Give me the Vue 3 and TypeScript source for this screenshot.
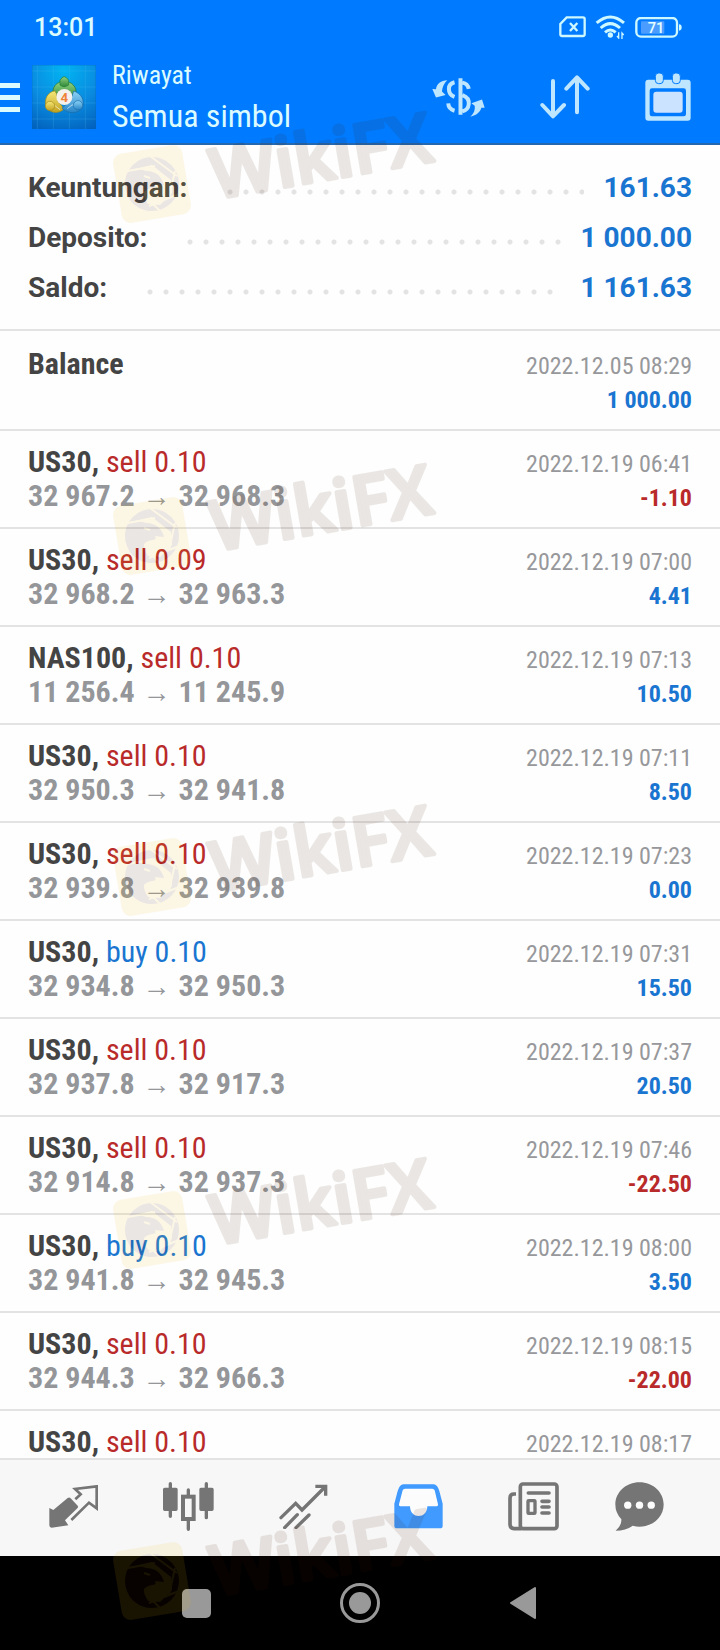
<script setup lang="ts">
interface SummaryLine {
  label: string
  value: string
}

interface Deal {
  symbol: string
  side?: 'buy' | 'sell'
  volume?: string
  open?: string
  close?: string
  time: string
  profit: string
}

const summary: SummaryLine[] = [
  { label: 'Keuntungan:', value: '161.63' },
  { label: 'Deposito:', value: '1 000.00' },
  { label: 'Saldo:', value: '1 161.63' },
]

const deals: Deal[] = [
  { symbol: 'Balance', time: '2022.12.05 08:29', profit: '1 000.00' },
  { symbol: 'US30', side: 'sell', volume: '0.10', open: '32 967.2', close: '32 968.3', time: '2022.12.19 06:41', profit: '-1.10' },
  { symbol: 'US30', side: 'sell', volume: '0.09', open: '32 968.2', close: '32 963.3', time: '2022.12.19 07:00', profit: '4.41' },
  { symbol: 'NAS100', side: 'sell', volume: '0.10', open: '11 256.4', close: '11 245.9', time: '2022.12.19 07:13', profit: '10.50' },
  { symbol: 'US30', side: 'sell', volume: '0.10', open: '32 950.3', close: '32 941.8', time: '2022.12.19 07:11', profit: '8.50' },
  { symbol: 'US30', side: 'sell', volume: '0.10', open: '32 939.8', close: '32 939.8', time: '2022.12.19 07:23', profit: '0.00' },
  { symbol: 'US30', side: 'buy', volume: '0.10', open: '32 934.8', close: '32 950.3', time: '2022.12.19 07:31', profit: '15.50' },
  { symbol: 'US30', side: 'sell', volume: '0.10', open: '32 937.8', close: '32 917.3', time: '2022.12.19 07:37', profit: '20.50' },
  { symbol: 'US30', side: 'sell', volume: '0.10', open: '32 914.8', close: '32 937.3', time: '2022.12.19 07:46', profit: '-22.50' },
  { symbol: 'US30', side: 'buy', volume: '0.10', open: '32 941.8', close: '32 945.3', time: '2022.12.19 08:00', profit: '3.50' },
  { symbol: 'US30', side: 'sell', volume: '0.10', open: '32 944.3', close: '32 966.3', time: '2022.12.19 08:15', profit: '-22.00' },
  { symbol: 'US30', side: 'sell', volume: '0.10', time: '2022.12.19 08:17', profit: '' },
]

const stampTops: number[] = [144, 496, 837, 1190, 1541]

const isLoss = (deal: Deal): boolean => deal.profit.startsWith('-')
</script>

<template>
  <div class="screen">
    <header class="top">
      <div class="status">
        <span class="clock">13:01</span>
        <span class="status-icons">
          <svg class="sim" viewBox="477 50 81 64" aria-hidden="true">
            <path d="M500 54H549Q554 54 554 59V105Q554 110 549 110H486Q481 110 481 105V74Z" />
            <path d="M510 71L532 95M532 71L510 95" />
          </svg>
          <svg class="wifi" viewBox="585 44 93 74" aria-hidden="true">
            <path class="wave" d="M590 68Q631 32 672 68M602 83Q631 57 660 83M615 96Q631 82 647 96" />
            <circle cx="631" cy="104" r="8" />
            <path class="thin" d="M656 96V113L651 107M666 116V98L671 104" />
          </svg>
          <svg class="battery" viewBox="704 48 141 63" aria-hidden="true">
            <rect class="charge" x="722" y="61" width="70" height="37" rx="3" />
            <rect class="shell" x="708" y="51" width="122" height="56" rx="14" />
            <path class="nub" d="M836 70Q844 70 844 79Q844 89 836 89Z" />
            <text x="767" y="95" text-anchor="middle">71</text>
          </svg>
        </span>
      </div>
      <div class="titlebar">
        <button class="menu" type="button" aria-label="Menu"><i></i><i></i><i></i></button>
        <svg class="app-icon" viewBox="96 194 192 194" aria-hidden="true">
          <defs>
            <radialGradient id="sky" cx="50%" cy="8%" r="100%">
              <stop offset="0" stop-color="#00b4f2" />
              <stop offset="0.55" stop-color="#0a8be0" />
              <stop offset="1" stop-color="#0262bd" />
            </radialGradient>
            <linearGradient id="green" x1="0" y1="0" x2="0" y2="1">
              <stop offset="0" stop-color="#8fd07e" />
              <stop offset="1" stop-color="#2f8838" />
            </linearGradient>
            <linearGradient id="yellow" x1="0" y1="0" x2="0" y2="1">
              <stop offset="0" stop-color="#f5e878" />
              <stop offset="1" stop-color="#c3a321" />
            </linearGradient>
            <linearGradient id="blue" x1="0" y1="0" x2="0" y2="1">
              <stop offset="0" stop-color="#8dd3f6" />
              <stop offset="1" stop-color="#2583c7" />
            </linearGradient>
          </defs>
          <rect x="96" y="194" width="192" height="194" fill="url(#sky)" />
          <path d="M112 194V388M160 194V388M208 194V388M256 194V388M96 212H288M96 260H288M96 308H288M96 356H288" stroke="#4fc0f5" stroke-opacity=".35" stroke-width="2" />
          <path d="M96 194H288V388H96Z" fill="none" stroke="#0565b5" stroke-opacity=".5" stroke-width="3" />
          <path d="M178 246C158 254 154 276 164 296L222 296C234 276 228 254 208 246Z" fill="url(#green)" stroke="#24742d" stroke-width="2" />
          <path d="M165 272C142 274 132 298 138 318C150 342 178 340 192 326L174 302C170 292 172 282 165 272Z" fill="url(#yellow)" stroke="#a18919" stroke-width="2" />
          <path d="M221 272C245 280 254 300 248 320C236 342 204 342 186 324L208 303Q217 291 221 272Z" fill="url(#blue)" stroke="#176da7" stroke-width="2" />
          <path d="M151 315L166 317L180 328M231 314L216 314L202 325" fill="none" stroke="#fff" stroke-opacity=".6" stroke-width="3" />
          <path d="M180 240Q192 218 206 240L206 254Q192 264 180 254Z" fill="url(#green)" stroke="#217b33" stroke-width="2" />
          <circle cx="150" cy="317" r="14" fill="url(#yellow)" stroke="#a48a18" stroke-width="2" />
          <circle cx="234" cy="315" r="14" fill="url(#blue)" stroke="#1b70ad" stroke-width="2" />
          <circle cx="193" cy="290" r="24" fill="#f4f1ec" />
          <text x="193" y="304" text-anchor="middle" class="four">4</text>
        </svg>
        <h1 class="heading">
          <span class="section">Riwayat</span>
          <span class="filter">Semua simbol</span>
        </h1>
        <div class="actions">
          <button type="button" aria-label="Simbol">
            <svg class="currency" viewBox="100 226 160 124" aria-hidden="true">
              <path class="line" d="M186 233V343M168 245Q151 249 151 265Q151 283 168 289M192 246Q208 249 211 265M192 284Q213 292 211 311Q209 329 192 333M149 309Q150 326 168 331" />
              <path d="M146 239C127 240 114 250 112 266L101 265L112 291L141 283L130 273C131 259 137 248 146 239ZM216 349C234 345 246 335 249 322H259L251 297L219 308L229 316C231 329 226 340 216 349Z" />
            </svg>
          </button>
          <button type="button" aria-label="Urutkan">
            <svg class="sort" viewBox="417 224 150 130" aria-hidden="true">
              <path class="line" d="M456 242V348M424 314L456 348L489 314M528 336V232M496 265L528 231L560 265" />
            </svg>
          </button>
          <button type="button" aria-label="Kalender">
            <svg class="calendar" viewBox="735 217 138 144" aria-hidden="true">
              <rect x="736" y="237" width="136" height="123" rx="9" />
              <rect class="gap" x="749" y="263" width="109" height="84" rx="7" />
              <rect class="day" x="760" y="273" width="88" height="63" rx="9" />
              <rect class="ring" x="766" y="217" width="24" height="32" rx="10" />
              <rect class="ring" x="817" y="217" width="24" height="32" rx="10" />
            </svg>
          </button>
        </div>
      </div>
    </header>

    <main class="history">
      <dl class="summary">
        <div v-for="line in summary" :key="line.label" class="summary-line">
          <dt>{{ line.label }}</dt>
          <span class="leader"></span>
          <dd>{{ line.value }}</dd>
        </div>
      </dl>
      <ul class="deals">
        <li v-for="deal in deals" :key="deal.time" class="deal" :class="{ deposit: !deal.side }">
          <div class="line">
            <span class="name">
              <b>{{ deal.symbol }}<template v-if="deal.side">, </template></b><span v-if="deal.side" :class="deal.side">{{ deal.side }} {{ deal.volume }}</span>
            </span>
            <time>{{ deal.time }}</time>
          </div>
          <div class="line">
            <span class="prices"><template v-if="deal.open">{{ deal.open }}<span class="arrow">→</span>{{ deal.close }}</template></span>
            <span class="profit" :class="{ loss: isLoss(deal) }">{{ deal.profit }}</span>
          </div>
        </li>
      </ul>
    </main>

    <nav class="tabs">
      <button type="button" aria-label="Kuotasi">
        <svg class="t1" viewBox="147 137 147 129" aria-hidden="true">
          <path class="solid" d="M148 206L160 212L203 176Q208 173 212 177L233 199Q236 203 232 207L195 243L205 258L155 265Q148 265 148 258Z" />
          <path d="M226 180L242 165L225 149L290 141V207L267 190L214 242" stroke-width="8" />
        </svg>
      </button>
      <button type="button" aria-label="Grafik">
        <svg class="t2" viewBox="489 126 153 147" aria-hidden="true">
          <path d="M511 131V229M619 131V233M565 150V168M565 242V268" stroke-width="10" stroke-linecap="round" />
          <path class="solid" d="M494 143H528Q533 143 533 148V208Q533 213 528 213H494Q489 213 489 208V148Q489 143 494 143ZM603 143H636Q641 143 641 148V208Q641 213 636 213H603Q598 213 598 208V148Q598 143 603 143Z" />
          <rect x="549" y="170" width="32" height="67" stroke-width="12" />
        </svg>
      </button>
      <button type="button" aria-label="Perdagangan">
        <svg class="t3" viewBox="836 130 147 136" aria-hidden="true">
          <path d="M842 231L886 188L905 208L974 139M853 261L891 222M887 261L926 223" stroke-width="10" stroke-linecap="round" />
          <path d="M945 137H976V165" stroke-width="10" />
        </svg>
      </button>
      <button type="button" aria-label="Riwayat" aria-current="page">
        <svg class="t4" viewBox="102 131 147 134" aria-hidden="true">
          <path class="active" d="M130 132H221Q232 133 238 152L248 190V256Q248 264 240 264H111Q103 264 103 256V190L113 152Q119 133 130 132Z" />
          <path class="hole" d="M135 145H217Q222 145 224 150L234 192Q235 198 230 198H202C202 237 150 237 150 198H121Q116 198 117 192L128 150Q130 145 135 145Z" />
        </svg>
      </button>
      <button type="button" aria-label="Berita">
        <svg class="t5" viewBox="444 125 153 146" aria-hidden="true">
          <path d="M468 161H462Q450 161 450 173V252Q450 265 462 265H484" stroke-width="11" />
          <rect x="481" y="131" width="110" height="134" rx="8" stroke-width="11" />
          <path d="M505 158H567M546 183H567M546 200H567M546 218H567" stroke-width="11" stroke-linecap="round" />
          <rect x="504" y="181" width="21" height="38" rx="2" stroke-width="10" />
        </svg>
      </button>
      <button type="button" aria-label="Pesan">
        <svg class="t6" viewBox="764 125 146 146" aria-hidden="true">
          <path class="solid" d="M837 126C877 126 909 156 909 192C909 229 877 258 837 258Q827 258 817 255Q796 270 766 270Q784 255 783 236Q765 217 765 192C765 156 797 126 837 126Z" />
          <circle class="dot" cx="802" cy="194" r="11" />
          <circle class="dot" cx="837" cy="194" r="11" />
          <circle class="dot" cx="872" cy="194" r="11" />
        </svg>
      </button>
    </nav>

    <footer class="system">
      <button type="button" aria-label="Aplikasi terbaru"><span class="square"></span></button>
      <button type="button" aria-label="Beranda"><span class="home"></span></button>
      <button type="button" aria-label="Kembali">
        <svg class="back" viewBox="0 0 28 34" aria-hidden="true"><path d="M26 2V32L2 17Z" /></svg>
      </button>
    </footer>

    <svg
      v-for="top in stampTops"
      :key="top"
      class="stamp"
      :style="{ top: top - 44 + 'px' }"
      viewBox="0 -44 340 130"
      aria-hidden="true"
    >
      <g transform="translate(40 40)">
        <rect class="tile" x="-35" y="-35" width="70" height="70" rx="9" transform="rotate(-9.5)" />
        <circle class="ink" r="27" />
        <path class="tile" d="M-22 -14L0 -19L19 -4L20 9L8 21L-4 20Q-14 5 0 -4Z" />
        <path class="ink" d="M-25 -10Q-17 -17 -6 -13Q8 -13 12 1L3 0Q5 4 0 4Q-13 6 -7 18Q-4 23 0 27Q-15 26 -22 16Q-29 2 -25 -10Z" />
        <path class="cut" d="M-24 -13L3 -18M-2 -28L25 -8M23 -13L17 14M27 10L-3 22M8 27L-5 14M-8 -8L-2 -6" />
      </g>
      <text transform="translate(103 55) rotate(-9.8)">WikiFX</text>
    </svg>
  </div>
</template>

<style>
body {
  margin: 0;
}
</style>

<style scoped>
.screen {
  position: relative;
  display: flex;
  flex-direction: column;
  height: 100vh;
  overflow: hidden;
  background: #fefefe;
  color: #444;
  font-family: "Roboto Condensed", Roboto, sans-serif;
}

button {
  display: flex;
  align-items: center;
  justify-content: center;
  margin: 0;
  padding: 0;
  border: 0;
  background: none;
}

svg {
  display: block;
}

.top {
  flex: none;
  border-bottom: 2px solid #2468b0;
  background: #007bff;
  color: #dcfbff;
}

.status {
  display: flex;
  align-items: center;
  justify-content: space-between;
  height: 56px;
  padding: 0 38px 0 34px;
}

.clock {
  font: 500 25px/56px Roboto, sans-serif;
}

.status-icons {
  display: flex;
  align-items: center;
  gap: 9px;
  margin-bottom: 2px;
}

.status-icons path,
.status-icons .shell {
  fill: none;
  stroke: #cdf8ff;
  stroke-width: 7;
}

.sim {
  width: 27px;
}

.wifi {
  width: 31px;
}

.wifi circle {
  fill: #cdf8ff;
}

.status-icons .wave {
  stroke-width: 9;
}

.status-icons .thin {
  stroke-width: 4;
}

.battery {
  width: 47px;
}

.status-icons .nub {
  fill: #cdf8ff;
  stroke: none;
}

.charge {
  fill: #4a9dff;
}

.battery text {
  fill: #e4fdff;
  font: 500 44px Roboto, sans-serif;
}

.titlebar {
  display: flex;
  align-items: center;
  box-sizing: border-box;
  height: 87px;
  padding: 0 29px 5px 0;
}

.menu {
  flex-direction: column;
  gap: 7px;
  width: 20px;
  margin-right: 12px;
}

.menu i {
  width: 100%;
  height: 5px;
  background: #dcfbff;
}

.app-icon {
  width: 64px;
}

.four {
  fill: #ee8238;
  font: 700 40px Roboto, sans-serif;
}

.heading {
  display: flex;
  flex-direction: column;
  margin: 0 auto 0 16px;
  font-weight: 400;
  white-space: nowrap;
}

.section {
  font-size: 26px;
  line-height: 38px;
}

.filter {
  font-size: 32px;
  line-height: 44px;
}

.actions {
  display: flex;
  align-items: center;
  gap: 55px;
}

.actions svg {
  fill: #bfe6ff;
}

.actions .line {
  fill: none;
  stroke: #bfe6ff;
  stroke-width: 12;
  stroke-linecap: round;
  stroke-linejoin: round;
}

.actions .currency .line {
  stroke-linecap: butt;
}

.currency {
  width: 53px;
}

.sort {
  width: 50px;
}

.calendar {
  width: 46px;
}

.calendar .gap {
  fill: #007bff;
}

.calendar .day {
  fill: #cce3ff;
}

.calendar .ring {
  stroke: #007bff;
  stroke-width: 3;
}

.history {
  flex: 1;
  min-height: 0;
  overflow: hidden;
}

.summary {
  margin: 0;
  padding: 18px 28px 16px;
  border-bottom: 2px solid #e3e3e3;
  font: 700 28px/50px Roboto, sans-serif;
}

.summary-line {
  display: flex;
}

.summary dd {
  margin: 0;
  color: #1a75d1;
}

.leader {
  flex: 1;
  margin: 0 20px 0 35px;
  background: radial-gradient(circle at 8px 29px, #e3e3e3 2px, transparent 3px) 0 0 / 16px 50px repeat-x;
}

.deals {
  margin: 0;
  padding: 0;
  list-style: none;
}

.deal {
  padding: 14px 28px;
  border-bottom: 2px solid #e3e3e3;
}

.deal.deposit {
  padding-top: 16px;
}

.deal .line {
  display: flex;
  align-items: baseline;
  justify-content: space-between;
  height: 34px;
  font-size: 30px;
  line-height: 34px;
  white-space: nowrap;
}

.name b {
  white-space: pre;
}

.sell {
  color: #b92a2a;
}

.buy {
  color: #1a75d1;
}

time {
  color: #97989b;
  font-size: 24px;
}

.prices {
  color: #949699;
  font-weight: 700;
}

.prices::before {
  content: "\200b";
}

.arrow {
  margin: 0 8px;
  font-family: Roboto, serif;
  font-weight: 400;
  font-size: 28px;
}

.profit {
  color: #1a75d1;
  font-size: 24px;
  font-weight: 700;
}

.profit.loss {
  color: #b92a2a;
}

.tabs {
  flex: none;
  display: grid;
  grid-template-columns: repeat(5, 6fr) 5fr;
  box-sizing: border-box;
  height: 98px;
  padding: 0 33px 3px 16px;
  border-top: 2px solid #e3e3e3;
  background: #f7f7f7;
}

.tabs svg {
  fill: none;
  stroke: #757575;
}

.tabs .solid {
  fill: #757575;
  stroke: none;
}

.tabs .active {
  fill: #409aff;
  stroke: none;
}

.tabs .hole,
.tabs .dot {
  fill: #fcfcfc;
  stroke: none;
}

.t1,
.t3,
.t4,
.t6 {
  width: 49px;
}

.t2,
.t5 {
  width: 51px;
}

.system {
  flex: none;
  display: grid;
  grid-template-columns: repeat(3, 1fr);
  height: 94px;
  padding: 0 16%;
  background: #000;
}

.square {
  width: 29px;
  height: 29px;
  border-radius: 5px;
  background: #999;
}

.home {
  box-sizing: border-box;
  width: 40px;
  height: 40px;
  padding: 6px;
  border: 3px solid #999;
  border-radius: 50%;
  background: #999 content-box;
}

.back {
  width: 28px;
  fill: #999;
  stroke: #999;
  stroke-width: 2;
  stroke-linejoin: round;
}

.stamp {
  position: absolute;
  left: 112px;
  width: 340px;
  opacity: 0.1;
  pointer-events: none;
}

.tile {
  fill: #f0b818;
}

.ink {
  fill: #491b00;
}

.cut {
  fill: none;
  stroke: #f0b818;
  stroke-width: 2;
}

.stamp text {
  fill: #491b00;
  stroke: #491b00;
  stroke-width: 4;
  stroke-linejoin: round;
  font: 600 69px "Open Sans", sans-serif;
}
</style>
